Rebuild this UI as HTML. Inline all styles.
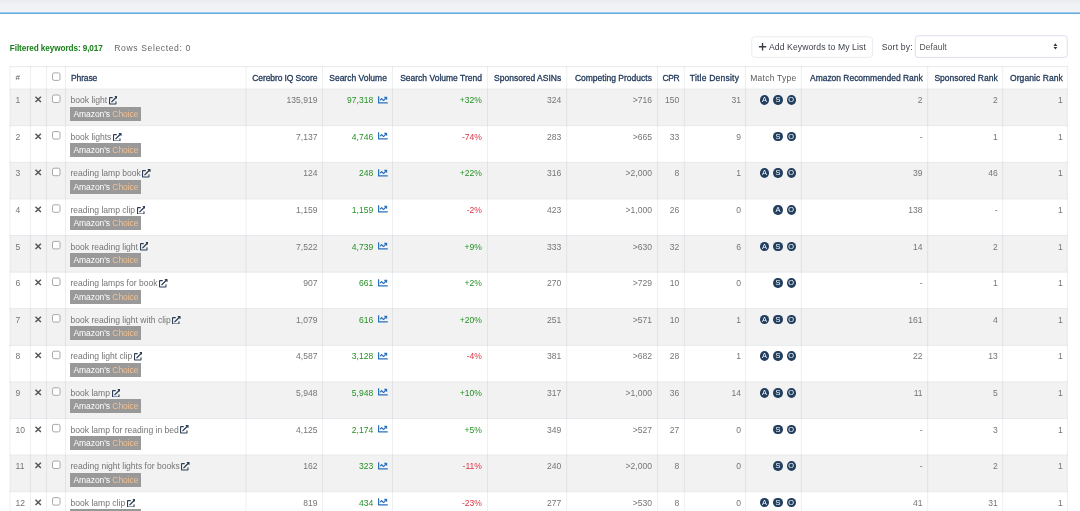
<!DOCTYPE html>
<html><head><meta charset="utf-8"><title>Cerebro</title>
<style>
html,body{margin:0;padding:0;background:#fff;}
body{width:1080px;height:511px;overflow:hidden;position:relative;font-family:"Liberation Sans",sans-serif;font-size:8.55px;color:#757575;}
.abs{position:absolute;white-space:nowrap;}
#t{position:absolute;left:0;top:0;width:1080px;height:511px;will-change:transform;}
.topbar{left:0;top:0;width:1080px;height:12.3px;background:linear-gradient(#ebecf0,#f0f1f5 3px,#f1f2f6);}
.blue{left:0;top:12.3px;width:1080px;height:1.6px;background:#5aa7e0;}
.vl{position:absolute;width:1px;background:#e7e9ee;}
.hl{position:absolute;height:1px;background:#e7e9ee;}
.row{position:absolute;left:10px;width:1057px;}
.odd{background:#f2f2f2;}
.h{color:#1f3758;font-weight:normal;-webkit-text-stroke:0.3px #1f3758;font-size:8.5px;line-height:10px;}
.c{line-height:10px;}
.r{text-align:right;}
.g{color:#259025;}
.red{color:#dc3545;}
.cb{position:absolute;width:8.2px;height:8.2px;border:0.9px solid #999;border-radius:1.8px;background:#fff;box-sizing:border-box;}
.badge{position:absolute;background:#999;color:#fff;width:70.5px;height:14.1px;line-height:14.1px;font-size:8.5px;padding:0;text-align:center;letter-spacing:-0.06px;text-indent:0.6px;}
.badge b{font-weight:normal;color:#f3c08f;}
svg.ext{width:8.6px;height:8.6px;fill:#2c3e55;vertical-align:1.6px;margin:-3px 0 -3px 1.6px;}
svg.chart{width:9.8px;height:9.8px;fill:#2b70ba;vertical-align:1.8px;margin:-3px 0 -3px 4.6px;}
.dot{position:absolute;width:9.4px;height:9.8px;border-radius:50%;background:#233f60;color:#fff;font-size:7.4px;font-weight:normal;line-height:9.9px;text-align:center;}
.x{font-size:9.6px;color:#555;font-weight:bold;}
</style></head><body>

<svg class="abs" style="left:0;top:0;" width="1080" height="511" viewBox="0 0 1080 511">
<defs><linearGradient id="tg" x1="0" y1="0" x2="0" y2="1"><stop offset="0" stop-color="#ebecf0"/><stop offset="0.3" stop-color="#f0f1f5"/><stop offset="1" stop-color="#f2f3f6"/></linearGradient></defs>
<rect x="0" y="0" width="1080" height="12.5" fill="url(#tg)"/>
<rect x="0" y="12.45" width="1080" height="1.5" fill="#5aa7e0"/>
<rect x="751.8" y="36.8" width="120.8" height="20.6" rx="3" fill="#fff" stroke="#e7eaee" stroke-width="0.9"/>
<rect x="915.4" y="35.8" width="151.8" height="21.6" rx="2.6" fill="#fff" stroke="#d6dbea" stroke-width="0.9"/>
<path d="M1055.4 43.3 L1057.3 45.9 H1053.5 Z M1055.4 49.6 L1057.3 47 H1053.5 Z" fill="#333"/>
<path d="M758.9 46.75 H766.2 M762.55 43.1 V50.4" stroke="#3a3f47" stroke-width="1.35" fill="none"/>
<rect x="10" y="89.10" width="1057.30" height="36.60" fill="#f2f2f2"/>
<rect x="10" y="162.30" width="1057.30" height="36.60" fill="#f2f2f2"/>
<rect x="10" y="235.50" width="1057.30" height="36.60" fill="#f2f2f2"/>
<rect x="10" y="308.70" width="1057.30" height="36.60" fill="#f2f2f2"/>
<rect x="10" y="381.90" width="1057.30" height="36.60" fill="#f2f2f2"/>
<rect x="10" y="455.10" width="1057.30" height="36.60" fill="#f2f2f2"/>
<rect x="9.55" y="66.25" width="1058.20" height="0.9" fill="#e5e8ec"/>
<rect x="9.55" y="88.65" width="1058.20" height="0.9" fill="#e5e8ec"/>
<rect x="9.55" y="125.25" width="1058.20" height="0.9" fill="#e5e8ec"/>
<rect x="9.55" y="161.85" width="1058.20" height="0.9" fill="#e5e8ec"/>
<rect x="9.55" y="198.45" width="1058.20" height="0.9" fill="#e5e8ec"/>
<rect x="9.55" y="235.05" width="1058.20" height="0.9" fill="#e5e8ec"/>
<rect x="9.55" y="271.65" width="1058.20" height="0.9" fill="#e5e8ec"/>
<rect x="9.55" y="308.25" width="1058.20" height="0.9" fill="#e5e8ec"/>
<rect x="9.55" y="344.85" width="1058.20" height="0.9" fill="#e5e8ec"/>
<rect x="9.55" y="381.45" width="1058.20" height="0.9" fill="#e5e8ec"/>
<rect x="9.55" y="418.05" width="1058.20" height="0.9" fill="#e5e8ec"/>
<rect x="9.55" y="454.65" width="1058.20" height="0.9" fill="#e5e8ec"/>
<rect x="9.55" y="491.25" width="1058.20" height="0.9" fill="#e5e8ec"/>
<rect x="9.55" y="527.85" width="1058.20" height="0.9" fill="#e5e8ec"/>
<rect x="9.55" y="66.25" width="0.9" height="446.30" fill="rgba(35,50,80,0.09)"/>
<rect x="30.05" y="66.25" width="0.9" height="446.30" fill="rgba(35,50,80,0.09)"/>
<rect x="46.05" y="66.25" width="0.9" height="446.30" fill="rgba(35,50,80,0.09)"/>
<rect x="65.05" y="66.25" width="0.9" height="446.30" fill="rgba(35,50,80,0.09)"/>
<rect x="245.55" y="66.25" width="0.9" height="446.30" fill="rgba(35,50,80,0.09)"/>
<rect x="322.05" y="66.25" width="0.9" height="446.30" fill="rgba(35,50,80,0.09)"/>
<rect x="392.05" y="66.25" width="0.9" height="446.30" fill="rgba(35,50,80,0.09)"/>
<rect x="487.05" y="66.25" width="0.9" height="446.30" fill="rgba(35,50,80,0.09)"/>
<rect x="566.30" y="66.25" width="0.9" height="446.30" fill="rgba(35,50,80,0.09)"/>
<rect x="657.05" y="66.25" width="0.9" height="446.30" fill="rgba(35,50,80,0.09)"/>
<rect x="683.80" y="66.25" width="0.9" height="446.30" fill="rgba(35,50,80,0.09)"/>
<rect x="745.05" y="66.25" width="0.9" height="446.30" fill="rgba(35,50,80,0.09)"/>
<rect x="800.85" y="66.25" width="0.9" height="446.30" fill="rgba(35,50,80,0.09)"/>
<rect x="927.25" y="66.25" width="0.9" height="446.30" fill="rgba(35,50,80,0.09)"/>
<rect x="1002.35" y="66.25" width="0.9" height="446.30" fill="rgba(35,50,80,0.09)"/>
<rect x="1066.85" y="66.25" width="0.9" height="446.30" fill="rgba(35,50,80,0.09)"/>
<rect x="52.50" y="72.90" width="7.5" height="7.5" rx="1.6" fill="#fff" stroke="#9a9a9a" stroke-width="0.85"/>
<rect x="52.50" y="95.00" width="7.5" height="7.5" rx="1.6" fill="#fff" stroke="#9a9a9a" stroke-width="0.85"/>
<rect x="52.50" y="131.60" width="7.5" height="7.5" rx="1.6" fill="#fff" stroke="#9a9a9a" stroke-width="0.85"/>
<rect x="52.50" y="168.20" width="7.5" height="7.5" rx="1.6" fill="#fff" stroke="#9a9a9a" stroke-width="0.85"/>
<rect x="52.50" y="204.80" width="7.5" height="7.5" rx="1.6" fill="#fff" stroke="#9a9a9a" stroke-width="0.85"/>
<rect x="52.50" y="241.40" width="7.5" height="7.5" rx="1.6" fill="#fff" stroke="#9a9a9a" stroke-width="0.85"/>
<rect x="52.50" y="278.00" width="7.5" height="7.5" rx="1.6" fill="#fff" stroke="#9a9a9a" stroke-width="0.85"/>
<rect x="52.50" y="314.60" width="7.5" height="7.5" rx="1.6" fill="#fff" stroke="#9a9a9a" stroke-width="0.85"/>
<rect x="52.50" y="351.20" width="7.5" height="7.5" rx="1.6" fill="#fff" stroke="#9a9a9a" stroke-width="0.85"/>
<rect x="52.50" y="387.80" width="7.5" height="7.5" rx="1.6" fill="#fff" stroke="#9a9a9a" stroke-width="0.85"/>
<rect x="52.50" y="424.40" width="7.5" height="7.5" rx="1.6" fill="#fff" stroke="#9a9a9a" stroke-width="0.85"/>
<rect x="52.50" y="461.00" width="7.5" height="7.5" rx="1.6" fill="#fff" stroke="#9a9a9a" stroke-width="0.85"/>
<rect x="52.50" y="497.60" width="7.5" height="7.5" rx="1.6" fill="#fff" stroke="#9a9a9a" stroke-width="0.85"/>
</svg>
<div id="t">
<div class="abs" style="left:9.8px;top:44px;line-height:10px;font-size:8.2px;font-weight:bold;color:#18801a;letter-spacing:-0.09px;">Filtered keywords: 9,017</div>
<div class="abs" style="left:114.3px;top:43.2px;line-height:10px;font-size:8.6px;color:#666;letter-spacing:0.6px;">Rows Selected: 0</div>
<div class="abs" style="left:769px;top:42px;line-height:10px;font-size:8.6px;color:#3a3f47;letter-spacing:0.1px;">Add Keywords to My List</div>
<div class="abs" style="left:881.7px;top:42px;line-height:10px;font-size:8.6px;color:#3a3f47;letter-spacing:0.2px;">Sort by:</div>
<div class="abs" style="left:919.5px;top:42px;line-height:10px;font-size:8.5px;color:#555;letter-spacing:0.05px;">Default</div>
<div class="abs h" style="left:15.60px;top:72.5px;color:#5a5a5a;-webkit-text-stroke:0;font-size:8px;">#</div>
<div class="abs h" style="left:71.10px;top:72.5px;letter-spacing:-0.15px;">Phrase</div>
<div class="abs h r" style="right:762.70px;top:72.5px;letter-spacing:-0.1px;">Cerebro IQ Score</div>
<div class="abs h r" style="right:693.10px;top:72.5px;">Search Volume</div>
<div class="abs h r" style="right:598.10px;top:72.5px;">Search Volume Trend</div>
<div class="abs h r" style="right:518.85px;top:72.5px;">Sponsored ASINs</div>
<div class="abs h r" style="right:428.10px;top:72.5px;">Competing Products</div>
<div class="abs h r" style="right:400.95px;top:72.5px;letter-spacing:-0.5px;">CPR</div>
<div class="abs h r" style="right:340.90px;top:72.5px;letter-spacing:0.22px;">Title Density</div>
<div class="abs h" style="left:745.5px;width:55.799999999999955px;text-align:center;top:72.5px;color:#5a5a5a;-webkit-text-stroke:0;letter-spacing:0.24px;">Match Type</div>
<div class="abs h r" style="right:157.30px;top:72.5px;letter-spacing:-0.03px;">Amazon Recommended Rank</div>
<div class="abs h r" style="right:82.30px;top:72.5px;">Sponsored Rank</div>
<div class="abs h r" style="right:17.10px;top:72.5px;letter-spacing:0.08px;">Organic Rank</div>
<div class="abs c" style="left:15.60px;top:95.10px;">1</div>
<div class="abs c x" style="left:34.40px;top:95.10px;">&#10005;</div>
<div class="abs c" style="left:70.50px;top:95.10px;">book light<svg class="ext" viewBox="0 0 512 512"><path d="M432 320h-32a16 16 0 0 0-16 16v112H64V128h144a16 16 0 0 0 16-16V80a16 16 0 0 0-16-16H48a48 48 0 0 0-48 48v352a48 48 0 0 0 48 48h352a48 48 0 0 0 48-48V336a16 16 0 0 0-16-16zM488 0H360c-21.37 0-32.05 25.91-17 41l35.73 35.73L135 320.37a24 24 0 0 0 0 34L157.67 377a24 24 0 0 0 34 0l243.61-243.68L471 169c15 15 41 4.5 41-17V24a24 24 0 0 0-24-24z"/></svg></div>
<div class="badge abs" style="left:70.40px;top:106.60px;">Amazon's <b>Choice</b></div>
<div class="abs c r" style="right:762.60px;top:95.10px;">135,919</div>
<div class="abs c r g" style="right:692.40px;top:95.10px;">97,318<svg class="chart" viewBox="0 0 512 512"><path d="M496 384H64V80c0-8.84-7.16-16-16-16H16C7.16 64 0 71.16 0 80v336c0 17.67 14.33 32 32 32h464c8.84 0 16-7.16 16-16v-32c0-8.84-7.16-16-16-16zM464 96H345.94c-21.38 0-32.09 25.85-16.97 40.97l32.4 32.4L288 242.75l-73.37-73.37c-12.5-12.5-32.76-12.5-45.25 0l-68.69 68.69c-6.25 6.25-6.25 16.38 0 22.63l22.62 22.62c6.25 6.25 16.38 6.25 22.63 0L192 237.25l73.37 73.37c12.5 12.5 32.76 12.5 45.25 0l96-96 32.4 32.4c15.12 15.12 40.97 4.41 40.97-16.97V112c.01-8.84-7.15-16-15.99-16z"/></svg></div>
<div class="abs c r g" style="right:598.10px;top:95.10px;">+32%</div>
<div class="abs c r" style="right:518.85px;top:95.10px;">324</div>
<div class="abs c r" style="right:428.10px;top:95.10px;">>716</div>
<div class="abs c r" style="right:400.65px;top:95.10px;">150</div>
<div class="abs c r" style="right:339.10px;top:95.10px;">31</div>
<div class="dot" style="left:786.50px;top:95.10px;">O</div>
<div class="dot" style="left:773.20px;top:95.10px;">S</div>
<div class="dot" style="left:759.80px;top:95.10px;">A</div>
<div class="abs c r" style="right:157.40px;top:95.10px;">2</div>
<div class="abs c r" style="right:82.30px;top:95.10px;">2</div>
<div class="abs c r" style="right:17.30px;top:95.10px;">1</div>
<div class="abs c" style="left:15.60px;top:131.70px;">2</div>
<div class="abs c x" style="left:34.40px;top:131.70px;">&#10005;</div>
<div class="abs c" style="left:70.50px;top:131.70px;">book lights<svg class="ext" viewBox="0 0 512 512"><path d="M432 320h-32a16 16 0 0 0-16 16v112H64V128h144a16 16 0 0 0 16-16V80a16 16 0 0 0-16-16H48a48 48 0 0 0-48 48v352a48 48 0 0 0 48 48h352a48 48 0 0 0 48-48V336a16 16 0 0 0-16-16zM488 0H360c-21.37 0-32.05 25.91-17 41l35.73 35.73L135 320.37a24 24 0 0 0 0 34L157.67 377a24 24 0 0 0 34 0l243.61-243.68L471 169c15 15 41 4.5 41-17V24a24 24 0 0 0-24-24z"/></svg></div>
<div class="badge abs" style="left:70.40px;top:143.20px;">Amazon's <b>Choice</b></div>
<div class="abs c r" style="right:762.60px;top:131.70px;">7,137</div>
<div class="abs c r g" style="right:692.40px;top:131.70px;">4,746<svg class="chart" viewBox="0 0 512 512"><path d="M496 384H64V80c0-8.84-7.16-16-16-16H16C7.16 64 0 71.16 0 80v336c0 17.67 14.33 32 32 32h464c8.84 0 16-7.16 16-16v-32c0-8.84-7.16-16-16-16zM464 96H345.94c-21.38 0-32.09 25.85-16.97 40.97l32.4 32.4L288 242.75l-73.37-73.37c-12.5-12.5-32.76-12.5-45.25 0l-68.69 68.69c-6.25 6.25-6.25 16.38 0 22.63l22.62 22.62c6.25 6.25 16.38 6.25 22.63 0L192 237.25l73.37 73.37c12.5 12.5 32.76 12.5 45.25 0l96-96 32.4 32.4c15.12 15.12 40.97 4.41 40.97-16.97V112c.01-8.84-7.15-16-15.99-16z"/></svg></div>
<div class="abs c r red" style="right:598.10px;top:131.70px;">-74%</div>
<div class="abs c r" style="right:518.85px;top:131.70px;">283</div>
<div class="abs c r" style="right:428.10px;top:131.70px;">>665</div>
<div class="abs c r" style="right:400.65px;top:131.70px;">33</div>
<div class="abs c r" style="right:339.10px;top:131.70px;">9</div>
<div class="dot" style="left:786.50px;top:131.70px;">O</div>
<div class="dot" style="left:773.20px;top:131.70px;">S</div>
<div class="abs c r" style="right:157.40px;top:131.70px;">-</div>
<div class="abs c r" style="right:82.30px;top:131.70px;">1</div>
<div class="abs c r" style="right:17.30px;top:131.70px;">1</div>
<div class="abs c" style="left:15.60px;top:168.30px;">3</div>
<div class="abs c x" style="left:34.40px;top:168.30px;">&#10005;</div>
<div class="abs c" style="left:70.50px;top:168.30px;">reading lamp book<svg class="ext" viewBox="0 0 512 512"><path d="M432 320h-32a16 16 0 0 0-16 16v112H64V128h144a16 16 0 0 0 16-16V80a16 16 0 0 0-16-16H48a48 48 0 0 0-48 48v352a48 48 0 0 0 48 48h352a48 48 0 0 0 48-48V336a16 16 0 0 0-16-16zM488 0H360c-21.37 0-32.05 25.91-17 41l35.73 35.73L135 320.37a24 24 0 0 0 0 34L157.67 377a24 24 0 0 0 34 0l243.61-243.68L471 169c15 15 41 4.5 41-17V24a24 24 0 0 0-24-24z"/></svg></div>
<div class="badge abs" style="left:70.40px;top:179.80px;">Amazon's <b>Choice</b></div>
<div class="abs c r" style="right:762.60px;top:168.30px;">124</div>
<div class="abs c r g" style="right:692.40px;top:168.30px;">248<svg class="chart" viewBox="0 0 512 512"><path d="M496 384H64V80c0-8.84-7.16-16-16-16H16C7.16 64 0 71.16 0 80v336c0 17.67 14.33 32 32 32h464c8.84 0 16-7.16 16-16v-32c0-8.84-7.16-16-16-16zM464 96H345.94c-21.38 0-32.09 25.85-16.97 40.97l32.4 32.4L288 242.75l-73.37-73.37c-12.5-12.5-32.76-12.5-45.25 0l-68.69 68.69c-6.25 6.25-6.25 16.38 0 22.63l22.62 22.62c6.25 6.25 16.38 6.25 22.63 0L192 237.25l73.37 73.37c12.5 12.5 32.76 12.5 45.25 0l96-96 32.4 32.4c15.12 15.12 40.97 4.41 40.97-16.97V112c.01-8.84-7.15-16-15.99-16z"/></svg></div>
<div class="abs c r g" style="right:598.10px;top:168.30px;">+22%</div>
<div class="abs c r" style="right:518.85px;top:168.30px;">316</div>
<div class="abs c r" style="right:428.10px;top:168.30px;">>2,000</div>
<div class="abs c r" style="right:400.65px;top:168.30px;">8</div>
<div class="abs c r" style="right:339.10px;top:168.30px;">1</div>
<div class="dot" style="left:786.50px;top:168.30px;">O</div>
<div class="dot" style="left:773.20px;top:168.30px;">S</div>
<div class="dot" style="left:759.80px;top:168.30px;">A</div>
<div class="abs c r" style="right:157.40px;top:168.30px;">39</div>
<div class="abs c r" style="right:82.30px;top:168.30px;">46</div>
<div class="abs c r" style="right:17.30px;top:168.30px;">1</div>
<div class="abs c" style="left:15.60px;top:204.90px;">4</div>
<div class="abs c x" style="left:34.40px;top:204.90px;">&#10005;</div>
<div class="abs c" style="left:70.50px;top:204.90px;">reading lamp clip<svg class="ext" viewBox="0 0 512 512"><path d="M432 320h-32a16 16 0 0 0-16 16v112H64V128h144a16 16 0 0 0 16-16V80a16 16 0 0 0-16-16H48a48 48 0 0 0-48 48v352a48 48 0 0 0 48 48h352a48 48 0 0 0 48-48V336a16 16 0 0 0-16-16zM488 0H360c-21.37 0-32.05 25.91-17 41l35.73 35.73L135 320.37a24 24 0 0 0 0 34L157.67 377a24 24 0 0 0 34 0l243.61-243.68L471 169c15 15 41 4.5 41-17V24a24 24 0 0 0-24-24z"/></svg></div>
<div class="badge abs" style="left:70.40px;top:216.40px;">Amazon's <b>Choice</b></div>
<div class="abs c r" style="right:762.60px;top:204.90px;">1,159</div>
<div class="abs c r g" style="right:692.40px;top:204.90px;">1,159<svg class="chart" viewBox="0 0 512 512"><path d="M496 384H64V80c0-8.84-7.16-16-16-16H16C7.16 64 0 71.16 0 80v336c0 17.67 14.33 32 32 32h464c8.84 0 16-7.16 16-16v-32c0-8.84-7.16-16-16-16zM464 96H345.94c-21.38 0-32.09 25.85-16.97 40.97l32.4 32.4L288 242.75l-73.37-73.37c-12.5-12.5-32.76-12.5-45.25 0l-68.69 68.69c-6.25 6.25-6.25 16.38 0 22.63l22.62 22.62c6.25 6.25 16.38 6.25 22.63 0L192 237.25l73.37 73.37c12.5 12.5 32.76 12.5 45.25 0l96-96 32.4 32.4c15.12 15.12 40.97 4.41 40.97-16.97V112c.01-8.84-7.15-16-15.99-16z"/></svg></div>
<div class="abs c r red" style="right:598.10px;top:204.90px;">-2%</div>
<div class="abs c r" style="right:518.85px;top:204.90px;">423</div>
<div class="abs c r" style="right:428.10px;top:204.90px;">>1,000</div>
<div class="abs c r" style="right:400.65px;top:204.90px;">26</div>
<div class="abs c r" style="right:339.10px;top:204.90px;">0</div>
<div class="dot" style="left:786.50px;top:204.90px;">O</div>
<div class="dot" style="left:773.20px;top:204.90px;">A</div>
<div class="abs c r" style="right:157.40px;top:204.90px;">138</div>
<div class="abs c r" style="right:82.30px;top:204.90px;">-</div>
<div class="abs c r" style="right:17.30px;top:204.90px;">1</div>
<div class="abs c" style="left:15.60px;top:241.50px;">5</div>
<div class="abs c x" style="left:34.40px;top:241.50px;">&#10005;</div>
<div class="abs c" style="left:70.50px;top:241.50px;">book reading light<svg class="ext" viewBox="0 0 512 512"><path d="M432 320h-32a16 16 0 0 0-16 16v112H64V128h144a16 16 0 0 0 16-16V80a16 16 0 0 0-16-16H48a48 48 0 0 0-48 48v352a48 48 0 0 0 48 48h352a48 48 0 0 0 48-48V336a16 16 0 0 0-16-16zM488 0H360c-21.37 0-32.05 25.91-17 41l35.73 35.73L135 320.37a24 24 0 0 0 0 34L157.67 377a24 24 0 0 0 34 0l243.61-243.68L471 169c15 15 41 4.5 41-17V24a24 24 0 0 0-24-24z"/></svg></div>
<div class="badge abs" style="left:70.40px;top:253.00px;">Amazon's <b>Choice</b></div>
<div class="abs c r" style="right:762.60px;top:241.50px;">7,522</div>
<div class="abs c r g" style="right:692.40px;top:241.50px;">4,739<svg class="chart" viewBox="0 0 512 512"><path d="M496 384H64V80c0-8.84-7.16-16-16-16H16C7.16 64 0 71.16 0 80v336c0 17.67 14.33 32 32 32h464c8.84 0 16-7.16 16-16v-32c0-8.84-7.16-16-16-16zM464 96H345.94c-21.38 0-32.09 25.85-16.97 40.97l32.4 32.4L288 242.75l-73.37-73.37c-12.5-12.5-32.76-12.5-45.25 0l-68.69 68.69c-6.25 6.25-6.25 16.38 0 22.63l22.62 22.62c6.25 6.25 16.38 6.25 22.63 0L192 237.25l73.37 73.37c12.5 12.5 32.76 12.5 45.25 0l96-96 32.4 32.4c15.12 15.12 40.97 4.41 40.97-16.97V112c.01-8.84-7.15-16-15.99-16z"/></svg></div>
<div class="abs c r g" style="right:598.10px;top:241.50px;">+9%</div>
<div class="abs c r" style="right:518.85px;top:241.50px;">333</div>
<div class="abs c r" style="right:428.10px;top:241.50px;">>630</div>
<div class="abs c r" style="right:400.65px;top:241.50px;">32</div>
<div class="abs c r" style="right:339.10px;top:241.50px;">6</div>
<div class="dot" style="left:786.50px;top:241.50px;">O</div>
<div class="dot" style="left:773.20px;top:241.50px;">S</div>
<div class="dot" style="left:759.80px;top:241.50px;">A</div>
<div class="abs c r" style="right:157.40px;top:241.50px;">14</div>
<div class="abs c r" style="right:82.30px;top:241.50px;">2</div>
<div class="abs c r" style="right:17.30px;top:241.50px;">1</div>
<div class="abs c" style="left:15.60px;top:278.10px;">6</div>
<div class="abs c x" style="left:34.40px;top:278.10px;">&#10005;</div>
<div class="abs c" style="left:70.50px;top:278.10px;">reading lamps for book<svg class="ext" viewBox="0 0 512 512"><path d="M432 320h-32a16 16 0 0 0-16 16v112H64V128h144a16 16 0 0 0 16-16V80a16 16 0 0 0-16-16H48a48 48 0 0 0-48 48v352a48 48 0 0 0 48 48h352a48 48 0 0 0 48-48V336a16 16 0 0 0-16-16zM488 0H360c-21.37 0-32.05 25.91-17 41l35.73 35.73L135 320.37a24 24 0 0 0 0 34L157.67 377a24 24 0 0 0 34 0l243.61-243.68L471 169c15 15 41 4.5 41-17V24a24 24 0 0 0-24-24z"/></svg></div>
<div class="badge abs" style="left:70.40px;top:289.60px;">Amazon's <b>Choice</b></div>
<div class="abs c r" style="right:762.60px;top:278.10px;">907</div>
<div class="abs c r g" style="right:692.40px;top:278.10px;">661<svg class="chart" viewBox="0 0 512 512"><path d="M496 384H64V80c0-8.84-7.16-16-16-16H16C7.16 64 0 71.16 0 80v336c0 17.67 14.33 32 32 32h464c8.84 0 16-7.16 16-16v-32c0-8.84-7.16-16-16-16zM464 96H345.94c-21.38 0-32.09 25.85-16.97 40.97l32.4 32.4L288 242.75l-73.37-73.37c-12.5-12.5-32.76-12.5-45.25 0l-68.69 68.69c-6.25 6.25-6.25 16.38 0 22.63l22.62 22.62c6.25 6.25 16.38 6.25 22.63 0L192 237.25l73.37 73.37c12.5 12.5 32.76 12.5 45.25 0l96-96 32.4 32.4c15.12 15.12 40.97 4.41 40.97-16.97V112c.01-8.84-7.15-16-15.99-16z"/></svg></div>
<div class="abs c r g" style="right:598.10px;top:278.10px;">+2%</div>
<div class="abs c r" style="right:518.85px;top:278.10px;">270</div>
<div class="abs c r" style="right:428.10px;top:278.10px;">>729</div>
<div class="abs c r" style="right:400.65px;top:278.10px;">10</div>
<div class="abs c r" style="right:339.10px;top:278.10px;">0</div>
<div class="dot" style="left:786.50px;top:278.10px;">O</div>
<div class="dot" style="left:773.20px;top:278.10px;">S</div>
<div class="abs c r" style="right:157.40px;top:278.10px;">-</div>
<div class="abs c r" style="right:82.30px;top:278.10px;">1</div>
<div class="abs c r" style="right:17.30px;top:278.10px;">1</div>
<div class="abs c" style="left:15.60px;top:314.70px;">7</div>
<div class="abs c x" style="left:34.40px;top:314.70px;">&#10005;</div>
<div class="abs c" style="left:70.50px;top:314.70px;">book reading light with clip<svg class="ext" viewBox="0 0 512 512"><path d="M432 320h-32a16 16 0 0 0-16 16v112H64V128h144a16 16 0 0 0 16-16V80a16 16 0 0 0-16-16H48a48 48 0 0 0-48 48v352a48 48 0 0 0 48 48h352a48 48 0 0 0 48-48V336a16 16 0 0 0-16-16zM488 0H360c-21.37 0-32.05 25.91-17 41l35.73 35.73L135 320.37a24 24 0 0 0 0 34L157.67 377a24 24 0 0 0 34 0l243.61-243.68L471 169c15 15 41 4.5 41-17V24a24 24 0 0 0-24-24z"/></svg></div>
<div class="badge abs" style="left:70.40px;top:326.20px;">Amazon's <b>Choice</b></div>
<div class="abs c r" style="right:762.60px;top:314.70px;">1,079</div>
<div class="abs c r g" style="right:692.40px;top:314.70px;">616<svg class="chart" viewBox="0 0 512 512"><path d="M496 384H64V80c0-8.84-7.16-16-16-16H16C7.16 64 0 71.16 0 80v336c0 17.67 14.33 32 32 32h464c8.84 0 16-7.16 16-16v-32c0-8.84-7.16-16-16-16zM464 96H345.94c-21.38 0-32.09 25.85-16.97 40.97l32.4 32.4L288 242.75l-73.37-73.37c-12.5-12.5-32.76-12.5-45.25 0l-68.69 68.69c-6.25 6.25-6.25 16.38 0 22.63l22.62 22.62c6.25 6.25 16.38 6.25 22.63 0L192 237.25l73.37 73.37c12.5 12.5 32.76 12.5 45.25 0l96-96 32.4 32.4c15.12 15.12 40.97 4.41 40.97-16.97V112c.01-8.84-7.15-16-15.99-16z"/></svg></div>
<div class="abs c r g" style="right:598.10px;top:314.70px;">+20%</div>
<div class="abs c r" style="right:518.85px;top:314.70px;">251</div>
<div class="abs c r" style="right:428.10px;top:314.70px;">>571</div>
<div class="abs c r" style="right:400.65px;top:314.70px;">10</div>
<div class="abs c r" style="right:339.10px;top:314.70px;">1</div>
<div class="dot" style="left:786.50px;top:314.70px;">O</div>
<div class="dot" style="left:773.20px;top:314.70px;">S</div>
<div class="dot" style="left:759.80px;top:314.70px;">A</div>
<div class="abs c r" style="right:157.40px;top:314.70px;">161</div>
<div class="abs c r" style="right:82.30px;top:314.70px;">4</div>
<div class="abs c r" style="right:17.30px;top:314.70px;">1</div>
<div class="abs c" style="left:15.60px;top:351.30px;">8</div>
<div class="abs c x" style="left:34.40px;top:351.30px;">&#10005;</div>
<div class="abs c" style="left:70.50px;top:351.30px;">reading light clip<svg class="ext" viewBox="0 0 512 512"><path d="M432 320h-32a16 16 0 0 0-16 16v112H64V128h144a16 16 0 0 0 16-16V80a16 16 0 0 0-16-16H48a48 48 0 0 0-48 48v352a48 48 0 0 0 48 48h352a48 48 0 0 0 48-48V336a16 16 0 0 0-16-16zM488 0H360c-21.37 0-32.05 25.91-17 41l35.73 35.73L135 320.37a24 24 0 0 0 0 34L157.67 377a24 24 0 0 0 34 0l243.61-243.68L471 169c15 15 41 4.5 41-17V24a24 24 0 0 0-24-24z"/></svg></div>
<div class="badge abs" style="left:70.40px;top:362.80px;">Amazon's <b>Choice</b></div>
<div class="abs c r" style="right:762.60px;top:351.30px;">4,587</div>
<div class="abs c r g" style="right:692.40px;top:351.30px;">3,128<svg class="chart" viewBox="0 0 512 512"><path d="M496 384H64V80c0-8.84-7.16-16-16-16H16C7.16 64 0 71.16 0 80v336c0 17.67 14.33 32 32 32h464c8.84 0 16-7.16 16-16v-32c0-8.84-7.16-16-16-16zM464 96H345.94c-21.38 0-32.09 25.85-16.97 40.97l32.4 32.4L288 242.75l-73.37-73.37c-12.5-12.5-32.76-12.5-45.25 0l-68.69 68.69c-6.25 6.25-6.25 16.38 0 22.63l22.62 22.62c6.25 6.25 16.38 6.25 22.63 0L192 237.25l73.37 73.37c12.5 12.5 32.76 12.5 45.25 0l96-96 32.4 32.4c15.12 15.12 40.97 4.41 40.97-16.97V112c.01-8.84-7.15-16-15.99-16z"/></svg></div>
<div class="abs c r red" style="right:598.10px;top:351.30px;">-4%</div>
<div class="abs c r" style="right:518.85px;top:351.30px;">381</div>
<div class="abs c r" style="right:428.10px;top:351.30px;">>682</div>
<div class="abs c r" style="right:400.65px;top:351.30px;">28</div>
<div class="abs c r" style="right:339.10px;top:351.30px;">1</div>
<div class="dot" style="left:786.50px;top:351.30px;">O</div>
<div class="dot" style="left:773.20px;top:351.30px;">S</div>
<div class="dot" style="left:759.80px;top:351.30px;">A</div>
<div class="abs c r" style="right:157.40px;top:351.30px;">22</div>
<div class="abs c r" style="right:82.30px;top:351.30px;">13</div>
<div class="abs c r" style="right:17.30px;top:351.30px;">1</div>
<div class="abs c" style="left:15.60px;top:387.90px;">9</div>
<div class="abs c x" style="left:34.40px;top:387.90px;">&#10005;</div>
<div class="abs c" style="left:70.50px;top:387.90px;">book lamp<svg class="ext" viewBox="0 0 512 512"><path d="M432 320h-32a16 16 0 0 0-16 16v112H64V128h144a16 16 0 0 0 16-16V80a16 16 0 0 0-16-16H48a48 48 0 0 0-48 48v352a48 48 0 0 0 48 48h352a48 48 0 0 0 48-48V336a16 16 0 0 0-16-16zM488 0H360c-21.37 0-32.05 25.91-17 41l35.73 35.73L135 320.37a24 24 0 0 0 0 34L157.67 377a24 24 0 0 0 34 0l243.61-243.68L471 169c15 15 41 4.5 41-17V24a24 24 0 0 0-24-24z"/></svg></div>
<div class="badge abs" style="left:70.40px;top:399.40px;">Amazon's <b>Choice</b></div>
<div class="abs c r" style="right:762.60px;top:387.90px;">5,948</div>
<div class="abs c r g" style="right:692.40px;top:387.90px;">5,948<svg class="chart" viewBox="0 0 512 512"><path d="M496 384H64V80c0-8.84-7.16-16-16-16H16C7.16 64 0 71.16 0 80v336c0 17.67 14.33 32 32 32h464c8.84 0 16-7.16 16-16v-32c0-8.84-7.16-16-16-16zM464 96H345.94c-21.38 0-32.09 25.85-16.97 40.97l32.4 32.4L288 242.75l-73.37-73.37c-12.5-12.5-32.76-12.5-45.25 0l-68.69 68.69c-6.25 6.25-6.25 16.38 0 22.63l22.62 22.62c6.25 6.25 16.38 6.25 22.63 0L192 237.25l73.37 73.37c12.5 12.5 32.76 12.5 45.25 0l96-96 32.4 32.4c15.12 15.12 40.97 4.41 40.97-16.97V112c.01-8.84-7.15-16-15.99-16z"/></svg></div>
<div class="abs c r g" style="right:598.10px;top:387.90px;">+10%</div>
<div class="abs c r" style="right:518.85px;top:387.90px;">317</div>
<div class="abs c r" style="right:428.10px;top:387.90px;">>1,000</div>
<div class="abs c r" style="right:400.65px;top:387.90px;">36</div>
<div class="abs c r" style="right:339.10px;top:387.90px;">14</div>
<div class="dot" style="left:786.50px;top:387.90px;">O</div>
<div class="dot" style="left:773.20px;top:387.90px;">S</div>
<div class="dot" style="left:759.80px;top:387.90px;">A</div>
<div class="abs c r" style="right:157.40px;top:387.90px;">11</div>
<div class="abs c r" style="right:82.30px;top:387.90px;">5</div>
<div class="abs c r" style="right:17.30px;top:387.90px;">1</div>
<div class="abs c" style="left:15.60px;top:424.50px;">10</div>
<div class="abs c x" style="left:34.40px;top:424.50px;">&#10005;</div>
<div class="abs c" style="left:70.50px;top:424.50px;">book lamp for reading in bed<svg class="ext" viewBox="0 0 512 512"><path d="M432 320h-32a16 16 0 0 0-16 16v112H64V128h144a16 16 0 0 0 16-16V80a16 16 0 0 0-16-16H48a48 48 0 0 0-48 48v352a48 48 0 0 0 48 48h352a48 48 0 0 0 48-48V336a16 16 0 0 0-16-16zM488 0H360c-21.37 0-32.05 25.91-17 41l35.73 35.73L135 320.37a24 24 0 0 0 0 34L157.67 377a24 24 0 0 0 34 0l243.61-243.68L471 169c15 15 41 4.5 41-17V24a24 24 0 0 0-24-24z"/></svg></div>
<div class="badge abs" style="left:70.40px;top:436.00px;">Amazon's <b>Choice</b></div>
<div class="abs c r" style="right:762.60px;top:424.50px;">4,125</div>
<div class="abs c r g" style="right:692.40px;top:424.50px;">2,174<svg class="chart" viewBox="0 0 512 512"><path d="M496 384H64V80c0-8.84-7.16-16-16-16H16C7.16 64 0 71.16 0 80v336c0 17.67 14.33 32 32 32h464c8.84 0 16-7.16 16-16v-32c0-8.84-7.16-16-16-16zM464 96H345.94c-21.38 0-32.09 25.85-16.97 40.97l32.4 32.4L288 242.75l-73.37-73.37c-12.5-12.5-32.76-12.5-45.25 0l-68.69 68.69c-6.25 6.25-6.25 16.38 0 22.63l22.62 22.62c6.25 6.25 16.38 6.25 22.63 0L192 237.25l73.37 73.37c12.5 12.5 32.76 12.5 45.25 0l96-96 32.4 32.4c15.12 15.12 40.97 4.41 40.97-16.97V112c.01-8.84-7.15-16-15.99-16z"/></svg></div>
<div class="abs c r g" style="right:598.10px;top:424.50px;">+5%</div>
<div class="abs c r" style="right:518.85px;top:424.50px;">349</div>
<div class="abs c r" style="right:428.10px;top:424.50px;">>527</div>
<div class="abs c r" style="right:400.65px;top:424.50px;">27</div>
<div class="abs c r" style="right:339.10px;top:424.50px;">0</div>
<div class="dot" style="left:786.50px;top:424.50px;">O</div>
<div class="dot" style="left:773.20px;top:424.50px;">S</div>
<div class="abs c r" style="right:157.40px;top:424.50px;">-</div>
<div class="abs c r" style="right:82.30px;top:424.50px;">3</div>
<div class="abs c r" style="right:17.30px;top:424.50px;">1</div>
<div class="abs c" style="left:15.60px;top:461.10px;">11</div>
<div class="abs c x" style="left:34.40px;top:461.10px;">&#10005;</div>
<div class="abs c" style="left:70.50px;top:461.10px;">reading night lights for books<svg class="ext" viewBox="0 0 512 512"><path d="M432 320h-32a16 16 0 0 0-16 16v112H64V128h144a16 16 0 0 0 16-16V80a16 16 0 0 0-16-16H48a48 48 0 0 0-48 48v352a48 48 0 0 0 48 48h352a48 48 0 0 0 48-48V336a16 16 0 0 0-16-16zM488 0H360c-21.37 0-32.05 25.91-17 41l35.73 35.73L135 320.37a24 24 0 0 0 0 34L157.67 377a24 24 0 0 0 34 0l243.61-243.68L471 169c15 15 41 4.5 41-17V24a24 24 0 0 0-24-24z"/></svg></div>
<div class="badge abs" style="left:70.40px;top:472.60px;">Amazon's <b>Choice</b></div>
<div class="abs c r" style="right:762.60px;top:461.10px;">162</div>
<div class="abs c r g" style="right:692.40px;top:461.10px;">323<svg class="chart" viewBox="0 0 512 512"><path d="M496 384H64V80c0-8.84-7.16-16-16-16H16C7.16 64 0 71.16 0 80v336c0 17.67 14.33 32 32 32h464c8.84 0 16-7.16 16-16v-32c0-8.84-7.16-16-16-16zM464 96H345.94c-21.38 0-32.09 25.85-16.97 40.97l32.4 32.4L288 242.75l-73.37-73.37c-12.5-12.5-32.76-12.5-45.25 0l-68.69 68.69c-6.25 6.25-6.25 16.38 0 22.63l22.62 22.62c6.25 6.25 16.38 6.25 22.63 0L192 237.25l73.37 73.37c12.5 12.5 32.76 12.5 45.25 0l96-96 32.4 32.4c15.12 15.12 40.97 4.41 40.97-16.97V112c.01-8.84-7.15-16-15.99-16z"/></svg></div>
<div class="abs c r red" style="right:598.10px;top:461.10px;">-11%</div>
<div class="abs c r" style="right:518.85px;top:461.10px;">240</div>
<div class="abs c r" style="right:428.10px;top:461.10px;">>2,000</div>
<div class="abs c r" style="right:400.65px;top:461.10px;">8</div>
<div class="abs c r" style="right:339.10px;top:461.10px;">0</div>
<div class="dot" style="left:786.50px;top:461.10px;">O</div>
<div class="dot" style="left:773.20px;top:461.10px;">S</div>
<div class="abs c r" style="right:157.40px;top:461.10px;">-</div>
<div class="abs c r" style="right:82.30px;top:461.10px;">2</div>
<div class="abs c r" style="right:17.30px;top:461.10px;">1</div>
<div class="abs c" style="left:15.60px;top:497.70px;">12</div>
<div class="abs c x" style="left:34.40px;top:497.70px;">&#10005;</div>
<div class="abs c" style="left:70.50px;top:497.70px;">book lamp clip<svg class="ext" viewBox="0 0 512 512"><path d="M432 320h-32a16 16 0 0 0-16 16v112H64V128h144a16 16 0 0 0 16-16V80a16 16 0 0 0-16-16H48a48 48 0 0 0-48 48v352a48 48 0 0 0 48 48h352a48 48 0 0 0 48-48V336a16 16 0 0 0-16-16zM488 0H360c-21.37 0-32.05 25.91-17 41l35.73 35.73L135 320.37a24 24 0 0 0 0 34L157.67 377a24 24 0 0 0 34 0l243.61-243.68L471 169c15 15 41 4.5 41-17V24a24 24 0 0 0-24-24z"/></svg></div>
<div class="badge abs" style="left:70.40px;top:509.20px;">Amazon's <b>Choice</b></div>
<div class="abs c r" style="right:762.60px;top:497.70px;">819</div>
<div class="abs c r g" style="right:692.40px;top:497.70px;">434<svg class="chart" viewBox="0 0 512 512"><path d="M496 384H64V80c0-8.84-7.16-16-16-16H16C7.16 64 0 71.16 0 80v336c0 17.67 14.33 32 32 32h464c8.84 0 16-7.16 16-16v-32c0-8.84-7.16-16-16-16zM464 96H345.94c-21.38 0-32.09 25.85-16.97 40.97l32.4 32.4L288 242.75l-73.37-73.37c-12.5-12.5-32.76-12.5-45.25 0l-68.69 68.69c-6.25 6.25-6.25 16.38 0 22.63l22.62 22.62c6.25 6.25 16.38 6.25 22.63 0L192 237.25l73.37 73.37c12.5 12.5 32.76 12.5 45.25 0l96-96 32.4 32.4c15.12 15.12 40.97 4.41 40.97-16.97V112c.01-8.84-7.15-16-15.99-16z"/></svg></div>
<div class="abs c r red" style="right:598.10px;top:497.70px;">-23%</div>
<div class="abs c r" style="right:518.85px;top:497.70px;">277</div>
<div class="abs c r" style="right:428.10px;top:497.70px;">>530</div>
<div class="abs c r" style="right:400.65px;top:497.70px;">8</div>
<div class="abs c r" style="right:339.10px;top:497.70px;">0</div>
<div class="dot" style="left:786.50px;top:497.70px;">O</div>
<div class="dot" style="left:773.20px;top:497.70px;">S</div>
<div class="dot" style="left:759.80px;top:497.70px;">A</div>
<div class="abs c r" style="right:157.40px;top:497.70px;">41</div>
<div class="abs c r" style="right:82.30px;top:497.70px;">31</div>
<div class="abs c r" style="right:17.30px;top:497.70px;">1</div>
</div></body></html>
